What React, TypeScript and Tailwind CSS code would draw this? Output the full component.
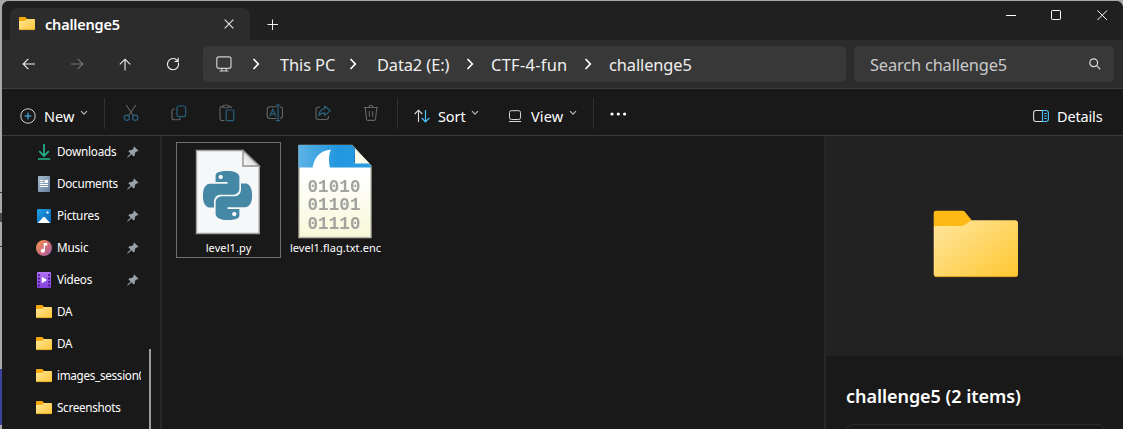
import type { ReactNode } from "react";
import { SiPython } from "react-icons/si";

function SmallFolder({ className = "" }: { className?: string }) {
  return (
    <svg width="16" height="16" viewBox="0 0 16 16" className={`shrink-0 ${className}`}>
      <defs>
        <linearGradient id="sf" x1="0" y1="0" x2="1" y2="1">
          <stop offset="0" stopColor="#ffe69b" />
          <stop offset="1" stopColor="#fdc734" />
        </linearGradient>
      </defs>
      <path d="M0 2.1Q0 1 1 1H6.4L8 2.9V7H0Z" fill="#f5ac0c" />
      <path d="M0 5.1H5.8L8.2 2.9H15Q16 2.9 16 3.9V13Q16 14 15 14H1Q0 14 0 13Z" fill="url(#sf)" />
      <path d="M.4 13.6H15.6" stroke="#dca42b" strokeWidth=".7" />
    </svg>
  );
}

function Chevron() {
  return (
    <svg width="8" height="12" viewBox="0 0 8 12" fill="none" stroke="#fff" strokeWidth="1.7" className="shrink-0">
      <path d="M1.5 1L6.3 6L1.5 11" />
    </svg>
  );
}

function Caret({ className = "" }: { className?: string }) {
  return (
    <svg width="8" height="6" viewBox="0 0 8 6" fill="none" stroke="#b9b9b9" strokeWidth="1.2" className={`-mt-px shrink-0 ${className}`}>
      <path d="M1 1.2L4 4.2L7 1.2" />
    </svg>
  );
}

function Pin() {
  return (
    <svg width="12" height="12" viewBox="0 0 12 12" className="shrink-0">
      <path d="M7.2 .5L11.5 4.8L10.6 5.4L9.8 5.2L7.9 7.1L7.7 9.7L6.7 10.5L4.5 8.3L1.2 11.3L.3 11.5L.5 10.6L3.6 7.4L1.4 5.2L2.2 4.3L4.9 4.1L6.8 2.2L6.5 1.3Z" fill="#97a3ab" />
    </svg>
  );
}

function NavSlot({ children }: { children: ReactNode }) {
  return <button className="flex h-9 w-12 shrink-0 items-center justify-center">{children}</button>;
}

function Crumb({ text, className }: { text: string; className: string }) {
  return (
    <div className={`flex shrink-0 items-center justify-between ${className}`}>
      <span className="mt-[3px] whitespace-nowrap">{text}</span>
      <Chevron />
    </div>
  );
}

function Divider() {
  return <div className="h-[31px] w-px shrink-0 bg-[#303030]" />;
}

function Tool({ children }: { children: ReactNode }) {
  return (
    <button className="flex h-8 w-12 shrink-0 items-center justify-center">
      <svg width="18" height="18" viewBox="0 0 18 18" fill="none" stroke="#656565" strokeWidth="1.1">
        {children}
      </svg>
    </button>
  );
}

const blue = "#29607c";

const places: { name: string; icon: ReactNode; track: string }[] = [
  {
    name: "Downloads",
    track: "tracking-[-0.2px]",
    icon: (
      <svg width="16" height="16" viewBox="0 0 16 16" fill="none" stroke="#23b28b" strokeWidth="1.7">
        <path d="M8 0V12M3.2 7.2L8 12L12.8 7.2" />
        <path d="M2 15H14.2" />
      </svg>
    ),
  },
  {
    name: "Documents",
    track: "tracking-[-0.25px]",
    icon: (
      <svg width="16" height="16" viewBox="0 0 16 16">
        <defs>
          <linearGradient id="doc" x1="0" y1="0" x2="1" y2="1">
            <stop offset="0" stopColor="#a9bdd0" />
            <stop offset="1" stopColor="#637f9d" />
          </linearGradient>
        </defs>
        <rect x="2" y="0" width="12" height="16" rx="1" fill="url(#doc)" />
        <path d="M4 4.5H7.4M4 6.5H7.4M4 8.5H12M4 10.5H12" stroke="#fff" />
        <rect x="8.6" y="4" width="3.4" height="3" fill="#fff" />
      </svg>
    ),
  },
  {
    name: "Pictures",
    track: "tracking-[-0.2px]",
    icon: (
      <svg width="16" height="16" viewBox="0 0 16 16">
        <defs>
          <linearGradient id="pic" x1="0" y1="0" x2="1" y2="1">
            <stop offset="0" stopColor="#20a0e6" />
            <stop offset="1" stopColor="#0b60b0" />
          </linearGradient>
        </defs>
        <rect x="1" y="1" width="14" height="14" rx="1" fill="url(#pic)" />
        <path d="M1.8 15L7.2 9.2Q8 8.4 8.8 9.2L14.2 15Z" fill="#fff" />
        <circle cx="11.5" cy="4.5" r="1.2" fill="#d9f1ff" />
      </svg>
    ),
  },
  {
    name: "Music",
    track: "tracking-[-0.1px]",
    icon: (
      <svg width="16" height="16" viewBox="0 0 16 16">
        <defs>
          <linearGradient id="mus" x1="0" y1="0" x2="1" y2="1">
            <stop offset="0.1" stopColor="#ef9153" />
            <stop offset="0.55" stopColor="#cf6d79" />
            <stop offset="1" stopColor="#9a5bb0" />
          </linearGradient>
        </defs>
        <circle cx="8" cy="8" r="8" fill="url(#mus)" />
        <path d="M7.7 3H11.2V5.5H9V10.6A2.1 2 0 1 1 7.7 8.9Z" fill="#fff" />
      </svg>
    ),
  },
  {
    name: "Videos",
    track: "tracking-[-0.25px]",
    icon: (
      <svg width="16" height="16" viewBox="0 0 16 16">
        <defs>
          <linearGradient id="vid" x1="0" y1="0" x2="0" y2="1">
            <stop offset="0" stopColor="#b275f3" />
            <stop offset="1" stopColor="#8440dd" />
          </linearGradient>
        </defs>
        <rect x="1" y="0" width="14" height="16" rx="1" fill="url(#vid)" />
        <path d="M2 2.2H4V4H2ZM2 5.6H4V7.4H2ZM2 9H4V10.8H2ZM2 12.4H4V14.2H2ZM12 2.2H14V4H12ZM12 5.6H14V7.4H12ZM12 9H14V10.8H12ZM12 12.4H14V14.2H12Z" fill="#4b1a92" />
        <path d="M5.8 4.8L11 8L5.8 11.2Z" fill="#fff" />
      </svg>
    ),
  },
];

const folders = ["DA", "DA", "images_session0", "Screenshots"];

function PythonFile() {
  return (
    <div className="-ml-[2px] grid h-[86px] w-[66px] place-items-center">
      <svg width="66" height="86" viewBox="0 0 66 86" className="col-start-1 row-start-1">
        <defs>
          <linearGradient id="fold" x1="0" y1="1" x2="1" y2="0">
            <stop offset="0" stopColor="#fff" />
            <stop offset="1" stopColor="#b7b7b7" />
          </linearGradient>
        </defs>
        <path d="M1.5 1.5H48L64.2 17V84.5H1.5Z" fill="#f6f7f9" stroke="#a1a1a1" strokeWidth="1.4" />
        <path d="M48 1.5L64.2 17H48Z" fill="url(#fold)" stroke="#909090" strokeWidth="1.4" />
      </svg>
      <SiPython className="col-start-1 row-start-1 mt-[7px] size-[49px] text-[#4588a6]" />
    </div>
  );
}

function EncodedFile() {
  return (
    <svg width="74" height="95" viewBox="0 0 74 95" className="ml-px">
      <defs>
        <linearGradient id="paper" x1="0" y1="0" x2="0" y2="1">
          <stop offset="0.3" stopColor="#fff" />
          <stop offset="1" stopColor="#f8f8d9" />
        </linearGradient>
        <linearGradient id="sea" x1="0" y1="0" x2="1" y2="0">
          <stop offset="0" stopColor="#5db3e4" />
          <stop offset="0.55" stopColor="#2297df" />
          <stop offset="1" stopColor="#2b9de2" />
        </linearGradient>
        <filter id="soft">
          <feGaussianBlur stdDeviation="0.75" />
        </filter>
      </defs>
      <path d="M1 1.5H54L73 22V93.5H1Z" fill="url(#paper)" stroke="#b8b8a8" strokeWidth="1.3" />
      <path d="M.5 1H54L73 22V23.5H.5Z" fill="url(#sea)" />
      <path d="M14.5 24C16.5 13 22 6.5 33 5.5C30.5 10.5 30.5 17 32 24Z" fill="#fff" />
      <path d="M53 1L57 5L56.5 18H69L73 22.5Z" fill="#17425a" />
      <path d="M57 4.5L71.5 19.5H57Z" fill="#fdfce9" />
      <g filter="url(#soft)" fill="#a3a3a0" fontFamily="Liberation Mono" fontSize="17.5" fontWeight="700">
        <text x="9.5" y="48" textLength="53">01010</text>
        <text x="9.5" y="66" textLength="53">01101</text>
        <text x="9.5" y="84.5" textLength="53">01110</text>
      </g>
    </svg>
  );
}

export default function App() {
  return (
    <div className="flex h-[429px] w-[1123px] overflow-hidden bg-[#a7a9a8] font-['Noto_Sans',sans-serif] text-white">
      <div className="flex w-[2px] shrink-0 flex-col">
        <div className="h-[192px]" />
        <div className="h-px bg-[#333]" />
        <div className="h-[20px]" />
        <div className="h-[9px] bg-[#4a4a4a]" />
        <div className="h-[24px]" />
        <div className="h-px bg-[#333]" />
        <div className="h-[122px]" />
        <div className="h-[56px] bg-[#3b439b]" />
      </div>

      <div className="mt-px flex h-[428px] w-[1121px] flex-col overflow-hidden rounded-t-[7px] bg-[#191919]">
        <header className="flex h-[39px] shrink-0 bg-[#202020] pl-2">
          <div className="mt-[7px] flex h-8 w-[240px] items-center rounded-t-lg bg-[#2c2c2c] pl-[9px]">
            <SmallFolder />
            <span className="ml-[10px] w-[179px] text-[14.5px] leading-5 font-semibold tracking-[-0.2px]">challenge5</span>
            <svg width="10" height="10" viewBox="0 0 10 10" stroke="#e8e8e8" strokeWidth="1.1">
              <path d="M.7 .7L9.3 9.3M9.3 .7L.7 9.3" />
            </svg>
          </div>
          <svg width="12" height="12" viewBox="0 0 12 12" stroke="#eee" className="mt-[18px] ml-[17px]">
            <path d="M.5 5.5H11M5.5 .5V11" />
          </svg>
          <div className="mt-[8px] mr-[15px] ml-auto flex h-[13px] items-center gap-[35px]">
            <svg width="10" height="11" viewBox="0 0 10 11" stroke="#fff">
              <path d="M0 5.5H10" />
            </svg>
            <svg width="11" height="11" viewBox="0 0 11 11" fill="none" stroke="#fff">
              <rect x=".5" y=".5" width="9" height="9" rx=".8" />
            </svg>
            <svg width="11" height="11" viewBox="0 0 11 11" stroke="#fff">
              <path d="M.5 .5L10 10M10 .5L.5 10" />
            </svg>
          </div>
        </header>

        <nav className="flex h-[49px] shrink-0 border-b border-[#3d3d3d] bg-[#2c2c2c] pt-[6px] pl-[3px] text-[16.4px] text-[#f0f0f0]">
          <NavSlot>
            <svg width="14" height="12" viewBox="0 0 14 12" fill="none" stroke="#f0f0f0" strokeWidth="1.1" className="-mt-px">
              <path d="M13 6H1.2M6.3 .8L1.2 6L6.3 11.2" />
            </svg>
          </NavSlot>
          <NavSlot>
            <svg width="14" height="12" viewBox="0 0 14 12" fill="none" stroke="#757575" strokeWidth="1.1" className="-mt-px">
              <path d="M1 6H12.8M7.7 .8L12.8 6L7.7 11.2" />
            </svg>
          </NavSlot>
          <NavSlot>
            <svg width="12" height="13" viewBox="0 0 12 13" fill="none" stroke="#f0f0f0" strokeWidth="1.1">
              <path d="M6 12.5V1.2M.8 6.4L6 1.2L11.2 6.4" />
            </svg>
          </NavSlot>
          <NavSlot>
            <svg width="14" height="14" viewBox="0 0 14 14" fill="none" stroke="#f0f0f0" strokeWidth="1.15" className="-mt-px">
              <path d="M12.4 5.6A5.6 5.6 0 1 1 10.4 2.7L12 4.3M12.2 .8V4.5H8.5" />
            </svg>
          </NavSlot>
          <div className="ml-[6px] flex h-9 w-[643px] shrink-0 items-center rounded-[5px] bg-[#383838] pl-[13px]">
            <svg width="16" height="16" viewBox="0 0 16 16" fill="none" stroke="#cfcfcf" strokeWidth="1.2" className="mr-[20px]">
              <rect x=".8" y=".9" width="14.2" height="11.4" rx="2" />
              <path d="M5.8 12.5V14.8M10.2 12.5V14.8M3.5 15H12.5" />
            </svg>
            <div className="mr-[20px] flex w-2"><Chevron /></div>
            <Crumb text="This PC" className="w-[77px] mr-[20px] tracking-[-0.1px]" />
            <Crumb text="Data2 (E:)" className="w-[97px] mr-[17px] tracking-[-0.1px]" />
            <Crumb text="CTF-4-fun" className="w-[101px] mr-[17px] tracking-[0.3px]" />
            <span className="mt-[3px] tracking-[-0.1px]">challenge5</span>
          </div>
          <div className="ml-2 flex h-9 w-[260px] shrink-0 items-center justify-between rounded-[5px] bg-[#383838] pr-[13px] pl-4">
            <span className="mt-[3px] tracking-[-0.17px] text-[#c9c9c9]">Search challenge5</span>
            <svg width="12" height="12" viewBox="0 0 12 12" fill="none" stroke="#ddd" strokeWidth="1.2">
              <circle cx="4.7" cy="4.7" r="3.9" />
              <path d="M7.6 7.6L11.3 11.3" />
            </svg>
          </div>
        </nav>

        <div className="flex h-[47px] shrink-0 items-center border-b border-[#3a3a3a] pt-[2px] text-[14.5px]">
          <svg width="16" height="16" viewBox="0 0 16 16" fill="none" className="mt-[5px] ml-[18px] shrink-0">
            <circle cx="8" cy="8" r="7.2" stroke="#d2d2d2" />
            <path d="M8 4.6V11.4M4.6 8H11.4" stroke="#4cc2ff" />
          </svg>
          <span className="mt-[7px] ml-[8px] w-[36px] tracking-[0.1px]">New</span>
          <Caret />
          <div className="w-[16px] shrink-0" />
          <Divider />
          <div className="-mt-px ml-[2px] flex w-[290px] shrink-0">
            <Tool>
              <path d="M4.2 1L11.6 12M13.8 1L6.4 12" />
              <circle cx="4.7" cy="13.8" r="2.6" stroke={blue} strokeWidth="1.2" />
              <circle cx="13.2" cy="13.8" r="2.6" stroke={blue} strokeWidth="1.2" />
            </Tool>
            <Tool>
              <path d="M5 5H4Q2 5 2 7V13.5Q2 15.8 4.5 15.8H8.5Q10 15.8 10.5 14" />
              <rect x="7" y="2" width="8.7" height="10.7" rx="2" stroke={blue} strokeWidth="1.2" />
            </Tool>
            <Tool>
              <path d="M5 2.6H3.8Q2 2.6 2 4.4V14.5Q2 16.5 3.8 16.5H6.5M10.8 2.6H12Q13.5 2.6 13.5 4.2M5 2.5Q5 1.3 6 1.3H10Q11 1.3 11 2.5T10 3.8H6Q5 3.8 5 2.5Z" />
              <rect x="8.2" y="6" width="7.6" height="10.6" rx="1.3" stroke={blue} strokeWidth="1.2" />
            </Tool>
            <Tool>
              <path d="M10.5 2.8H4Q1.2 2.8 1.2 5.5V11.8Q1.2 14.5 4 14.5H10.5M13.8 2.8Q16.5 3 16.5 5.5V11.8Q16.5 14.2 13.8 14.5" />
              <path d="M3.8 12.2L6.8 5.2L9.8 12.2M5 9.8H8.6M12 1V16.6M9.8 1H14.2M9.8 16.6H14.2" stroke={blue} strokeWidth="1.2" />
            </Tool>
            <Tool>
              <path d="M6 3.2H4Q2 3.2 2 5.4V13Q2 15.5 4.3 15.5H12Q14.5 15.5 14.5 13V12" />
              <path d="M10.6 2L16.2 6.7L10.6 11.4V8.8Q6.7 8.8 4.9 11.8Q5.2 5.3 10.6 4.8Z" stroke={blue} strokeWidth="1.2" strokeLinejoin="round" />
            </Tool>
            <Tool>
              <path d="M1.8 3.5H16.2M7 3.3Q7 1.3 9 1.3T11 3.3M3.2 3.8L4.5 15Q4.7 16.4 6 16.4H12Q13.3 16.4 13.5 15L14.8 3.8M7.4 7V12.8M10.6 7V12.8" />
            </Tool>
          </div>
          <Divider />
          <svg width="16" height="14" viewBox="0 0 16 14" fill="none" className="mt-[5px] ml-[16px] shrink-0">
            <path d="M4.5 13V1.3M.7 5L4.5 1.2L8.3 5" stroke="#dcdcdc" strokeWidth="1.1" />
            <path d="M11.5 1V12.7M7.7 9L11.5 12.8L15.3 9" stroke="#4cc2ff" strokeWidth="1.2" />
          </svg>
          <span className="mt-[7px] ml-[8px] w-[33px] shrink-0 tracking-[-0.1px]">Sort</span>
          <Caret />
          <svg width="14" height="13" viewBox="0 0 14 13" fill="none" stroke="#d5d5d5" className="mt-[6px] ml-[29px] shrink-0">
            <rect x="1.5" y=".7" width="11" height="8.8" rx="1.8" />
            <path d="M1 11.5H13" />
          </svg>
          <span className="mt-[7px] ml-[9px] w-[38px] shrink-0 tracking-[0.1px]">View</span>
          <Caret />
          <div className="w-4 shrink-0" />
          <Divider />
          <svg width="17" height="4" viewBox="0 0 17 4" fill="#fff" className="mt-px ml-4 shrink-0">
            <circle cx="2" cy="2" r="1.6" />
            <circle cx="8.3" cy="2" r="1.6" />
            <circle cx="14.6" cy="2" r="1.6" />
          </svg>
          <div className="mt-[5px] mr-[20px] ml-auto flex items-center gap-2">
            <svg width="16" height="14" viewBox="0 0 16 14" fill="none">
              <path d="M9.5 1.5H3Q.6 1.5 .6 4V10Q.6 12.5 3 12.5H9.5" stroke="#ddd" strokeWidth="1.1" />
              <path d="M9.5 1.5H13Q15.4 1.5 15.4 4V10Q15.4 12.5 13 12.5H9.5ZM11.2 4.5H13.8M11.2 7H13.8M11.2 9.5H13.8" stroke="#4cc2ff" strokeWidth="1.1" />
            </svg>
            <span className="mt-[2px] w-[46px] tracking-[-0.15px]">Details</span>
          </div>
        </div>

        <main className="flex min-h-0 flex-1">
          <aside className="flex w-[160px] shrink-0 border-r-2 border-[#272727] text-[11.7px]">
            <div className="w-[139px] shrink-0 overflow-hidden">
              {places.map((p) => (
                <div key={p.name} className="flex h-8 items-center pl-[34px]">
                  <div className="w-4 shrink-0">{p.icon}</div>
                  <span className={`ml-[5px] w-[70px] shrink-0 ${p.track}`}>{p.name}</span>
                  <Pin />
                </div>
              ))}
              {folders.map((name, i) => (
                <div key={i} className="flex h-8 items-center pl-[34px]">
                  <SmallFolder />
                  <span className="ml-[5px] tracking-[-0.3px] whitespace-nowrap">{name}</span>
                </div>
              ))}
            </div>
            <div className="mt-[213px] ml-2 w-[2px] bg-[#9b9b9b]" />
          </aside>

          <section className="flex w-[662px] shrink-0 pt-[6px] pl-[14px] text-[11px] leading-4">
            <div className="flex h-[116px] w-[105px] flex-col items-center border border-[#707070] pt-[6px]">
              <PythonFile />
              <span className="mt-[5px] tracking-[0.1px]">level1.py</span>
            </div>
            <div className="flex w-[107px] flex-col items-center pt-[2px]">
              <EncodedFile />
              <span className="mt-[1px] ml-[2px] tracking-[0.05px] whitespace-nowrap">level1.flag.txt.enc</span>
            </div>
          </section>

          <aside className="flex w-[299px] shrink-0 flex-col border-l-2 border-[#272727]">
            <div className="flex h-[220px] shrink-0 justify-center bg-[#222] pt-[74px] pl-[2px]">
              <svg width="86" height="68" viewBox="0 0 86 68">
                <defs>
                  <linearGradient id="bf" x1="0" y1="0.1" x2="1" y2="1">
                    <stop offset="0" stopColor="#ffe59a" />
                    <stop offset="1" stopColor="#ffc730" />
                  </linearGradient>
                </defs>
                <path d="M.7 3Q.7 .7 3 .7H29.5Q31 .7 32 2L38.5 10V18H.7Z" fill="#fdba16" />
                <path d="M.7 18Q.7 16 2.7 16H28Q31 16 33.5 13.8L36.5 11.5Q38 10.2 40 10.2H82Q85 10.2 85 13V64Q85 67 82 67H4Q.7 67 .7 64Z" fill="url(#bf)" />
                <path d="M1.3 65.3Q2 66.6 4 66.6H82Q84 66.6 84.6 65.3" fill="none" stroke="#d99f23" />
              </svg>
            </div>
            <h2 className="mt-[28px] ml-[20px] text-[18px] leading-6 font-semibold tracking-[-0.05px] whitespace-nowrap">challenge5 (2 items)</h2>
            <div className="mt-4 ml-[21px] h-10 w-[257px] shrink-0 rounded-t-[5px] border border-[#2b2b2b]" />
          </aside>
        </main>
      </div>
    </div>
  );
}
